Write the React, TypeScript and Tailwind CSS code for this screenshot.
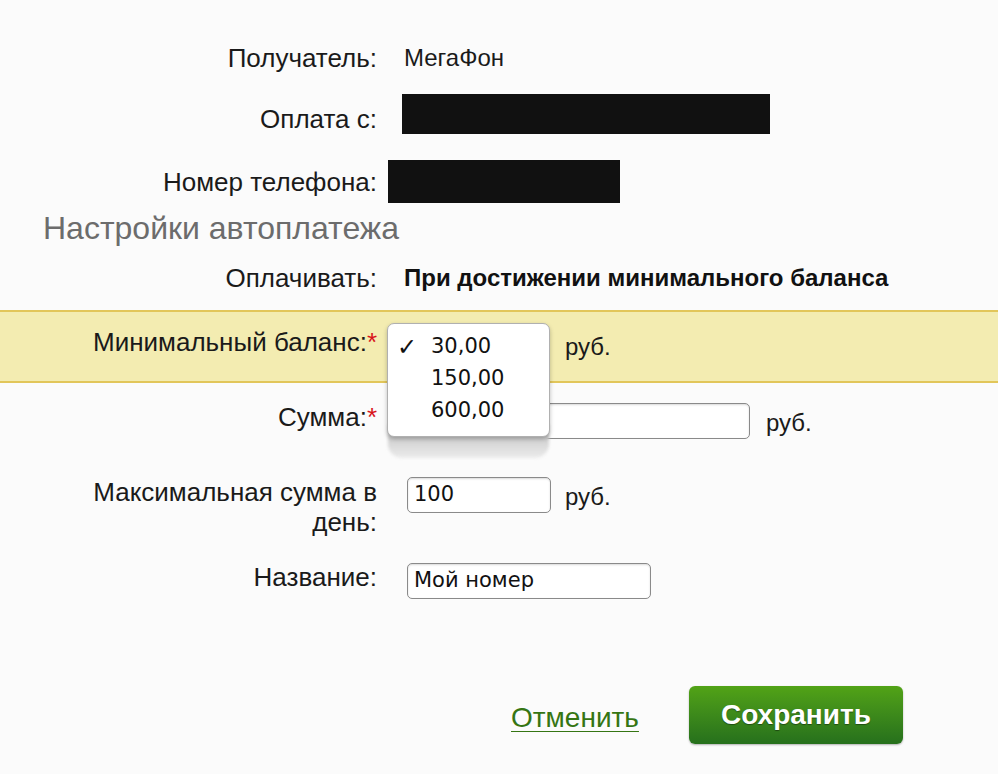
import React from "react";

const labelCls = "w-[377px] shrink-0 text-right text-[26px] leading-[30px] text-[#1a1a1a]";

function Field({ w, value }: { w: string; value: string }) {
  return (
    <div
      className={`${w} h-[36px] rounded-[5px] border border-[#8a8a8a] bg-white px-[6px] flex items-center text-[21px] text-[#111] shadow-[inset_0_1px_2px_rgba(0,0,0,0.15)]`}
      style={{ fontFamily: '"DejaVu Sans", sans-serif' }}
    >
      {value}
    </div>
  );
}

export default function App() {
  return (
    <div
      className="relative w-[998px] h-[774px] bg-[#fbfbfb] overflow-hidden text-[#1a1a1a]"
      style={{ fontFamily: '"Liberation Sans", Arial, sans-serif' }}
    >
      <div className="pt-[40px] flex flex-col">
        {/* Получатель */}
        <div className="flex items-center h-[36px]">
          <div className={labelCls}>Получатель:</div>
          <div className="ml-[27px] text-[24px]">МегаФон</div>
        </div>
        {/* Оплата с */}
        <div className="flex items-center h-[40px] mt-[18px]">
          <div className={`${labelCls} pt-[10px]`}>Оплата с:</div>
          <div className="ml-[25px] w-[368px] h-[40px] bg-[#111]" />
        </div>
        {/* Номер телефона */}
        <div className="flex items-center h-[43px] mt-[26px]">
          <div className={labelCls}>Номер телефона:</div>
          <div className="ml-[11px] w-[232px] h-[43px] bg-[#111]" />
        </div>
        {/* Heading */}
        <div className="ml-[43px] h-[40px] mt-[5px] flex items-center text-[32px] text-[#6c6c6c]">
          Настройки автоплатежа
        </div>
        {/* Оплачивать */}
        <div className="flex items-center h-[36px] mt-[12px]">
          <div className={labelCls}>Оплачивать:</div>
          <div className="ml-[27px] text-[24px] font-bold text-[#111]">При достижении минимального баланса</div>
        </div>
        {/* band */}
        <div className="mt-[14px] h-[73px] bg-[#f3ecb1] border-y-[2px] border-[#e2c65a] flex items-center">
          <div className={`${labelCls} -mt-[10px]`}>
            Минимальный баланс:<span className="text-[#d8141b]">*</span>
          </div>
          <div className="ml-[30px] w-[144px] h-[36px]" />
          <div className="ml-[14px] text-[24px]">руб.</div>
        </div>
        {/* Сумма */}
        <div className="flex items-center h-[36px] mt-[20px]">
          <div className={`${labelCls} -mt-[8px]`}>
            Сумма:<span className="text-[#d8141b]">*</span>
          </div>
          <div className="ml-[30px]">
            <Field w="w-[343px]" value="" />
          </div>
          <div className="ml-[16px] text-[24px] mt-[4px]">руб.</div>
        </div>
        {/* Максимальная сумма */}
        <div className="flex items-start mt-[38px]">
          <div className={`${labelCls} pl-[80px]`}>Максимальная сумма в день:</div>
          <div className="ml-[30px]">
            <Field w="w-[144px]" value="100" />
          </div>
          <div className="ml-[14px] text-[24px] mt-[2px]">руб.</div>
        </div>
        {/* Название */}
        <div className="flex items-center h-[36px] mt-[26px]">
          <div className={`${labelCls} -mt-[8px]`}>Название:</div>
          <div className="ml-[30px]">
            <Field w="w-[244px]" value="Мой номер" />
          </div>
        </div>
        {/* Buttons */}
        <div className="flex items-center mt-[87px]">
          <a className="ml-[511px] mt-[6px] text-[28px] text-[#357513] underline underline-offset-[4px] decoration-1">
            Отменить
          </a>
          <button className="ml-[50px] w-[214px] h-[58px] rounded-[6px] bg-gradient-to-b from-[#52a316] to-[#26701c] text-white text-[28px] font-bold shadow-[0_1px_2px_rgba(0,0,0,0.3)] [text-shadow:0_1px_1px_rgba(0,0,0,0.4)]">
            Сохранить
          </button>
        </div>
      </div>

      {/* dropdown shadow */}
      <div className="absolute left-[388px] top-[425px] w-[161px] h-[33px] rounded-b-[14px] bg-gradient-to-b from-[#bdbdbd] to-[#ececec] blur-[1.5px]" />
      {/* dropdown popup */}
      <div
        className="absolute left-[387px] top-[323px] w-[163px] h-[114px] rounded-[7px] bg-white border border-[#b0b0b0] shadow-[0_2px_4px_rgba(0,0,0,0.25)] pt-[7px]"
        style={{ fontFamily: '"DejaVu Sans", sans-serif' }}
      >
        <div className="flex items-center h-[32px] text-[21px] text-[#111]">
          <span className="w-[43px] pl-[9px] text-[24px] leading-none font-bold">✓</span>
          <span>30,00</span>
        </div>
        <div className="flex items-center h-[32px] text-[21px] text-[#111]">
          <span className="w-[43px]" />
          <span>150,00</span>
        </div>
        <div className="flex items-center h-[32px] text-[21px] text-[#111]">
          <span className="w-[43px]" />
          <span>600,00</span>
        </div>
      </div>
    </div>
  );
}
